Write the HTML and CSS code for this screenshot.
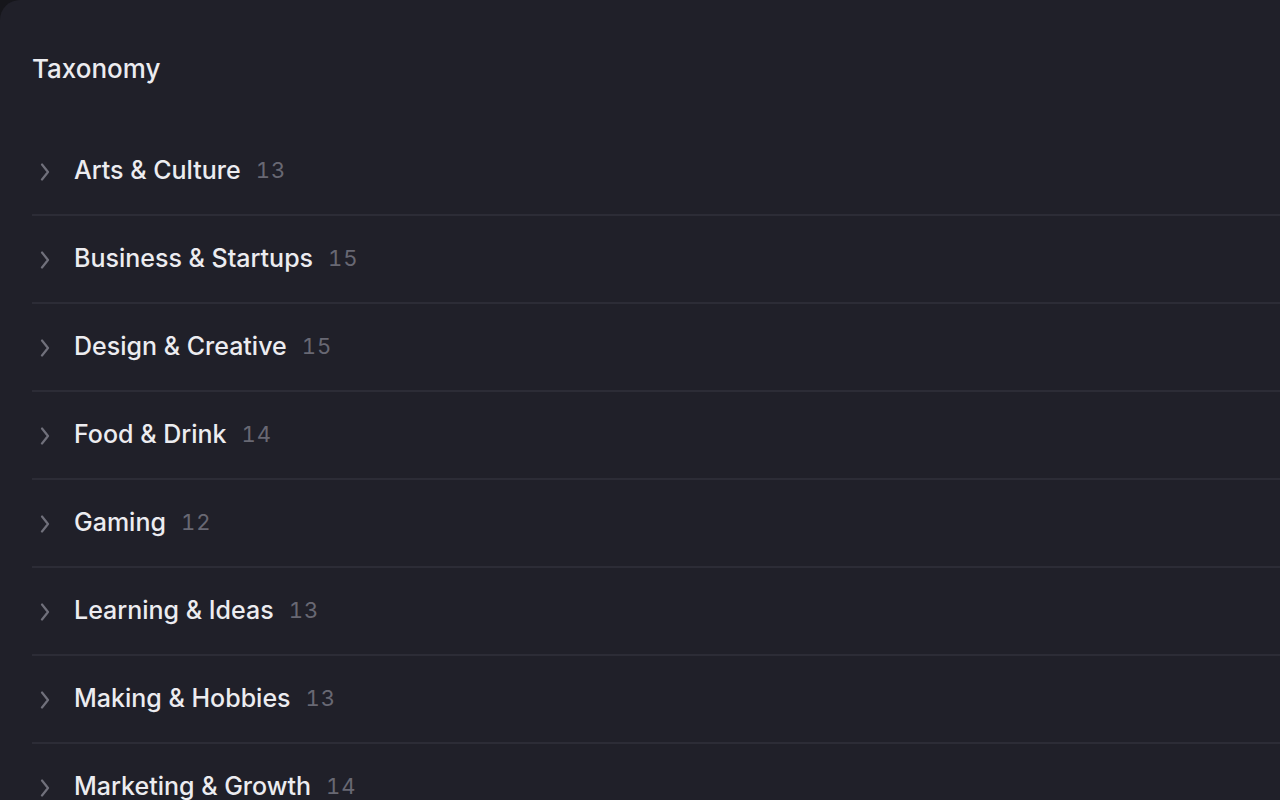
FILE: index.html
```html
<!DOCTYPE html>
<html lang="en">
<head>
  <meta charset="UTF-8">
  <title>Taxonomy</title>
  <link rel="stylesheet" href="styles.css">
</head>
<body>

<main class="panel">
  <h1 class="panel-title">Taxonomy</h1>

  <ul class="tree">
    <li class="tree-row">
      <svg class="chevron" viewBox="0 0 10 18"><path d="M2 1.5 8 9 2 16.5"/></svg>
      <span class="tree-label">Arts &amp; Culture</span>
      <span class="tree-count">13</span>
    </li>
    <li class="tree-row">
      <svg class="chevron" viewBox="0 0 10 18"><path d="M2 1.5 8 9 2 16.5"/></svg>
      <span class="tree-label">Business &amp; Startups</span>
      <span class="tree-count">15</span>
    </li>
    <li class="tree-row">
      <svg class="chevron" viewBox="0 0 10 18"><path d="M2 1.5 8 9 2 16.5"/></svg>
      <span class="tree-label">Design &amp; Creative</span>
      <span class="tree-count">15</span>
    </li>
    <li class="tree-row">
      <svg class="chevron" viewBox="0 0 10 18"><path d="M2 1.5 8 9 2 16.5"/></svg>
      <span class="tree-label">Food &amp; Drink</span>
      <span class="tree-count">14</span>
    </li>
    <li class="tree-row">
      <svg class="chevron" viewBox="0 0 10 18"><path d="M2 1.5 8 9 2 16.5"/></svg>
      <span class="tree-label">Gaming</span>
      <span class="tree-count">12</span>
    </li>
    <li class="tree-row">
      <svg class="chevron" viewBox="0 0 10 18"><path d="M2 1.5 8 9 2 16.5"/></svg>
      <span class="tree-label">Learning &amp; Ideas</span>
      <span class="tree-count">13</span>
    </li>
    <li class="tree-row">
      <svg class="chevron" viewBox="0 0 10 18"><path d="M2 1.5 8 9 2 16.5"/></svg>
      <span class="tree-label">Making &amp; Hobbies</span>
      <span class="tree-count">13</span>
    </li>
    <li class="tree-row">
      <svg class="chevron" viewBox="0 0 10 18"><path d="M2 1.5 8 9 2 16.5"/></svg>
      <span class="tree-label">Marketing &amp; Growth</span>
      <span class="tree-count">14</span>
    </li>
  </ul>
</main>

</body>
</html>
```

FILE: styles.css
```css
body {
  margin: 0;
  background-color: #16161b;
  font-family: Inter, "Noto Sans", sans-serif;
  color: #ececf0;
  overflow: hidden;
}

.panel {
  min-height: 100vh;
  background-color: #202029;
  border-top-left-radius: 20px;
  padding: 46px 0 0 32px;
  box-sizing: border-box;
}

.panel-title {
  margin: 0 0 36px 0;
  font-size: 26px;
  font-weight: 500;
  line-height: 46px;
}

/* lista de categorias */
.tree {
  list-style: none;
  margin: 0;
  padding: 0;
}

.tree-row {
  display: flex;
  align-items: center;
  height: 86px;
  border-bottom: 2px solid #2c2c36;
}

.chevron {
  width: 10px;
  height: 18px;
  margin: 1px 24px 0 8px;
  fill: none;
  stroke: #70707b;
  stroke-width: 2.2;
  stroke-linecap: round;
  stroke-linejoin: round;
}

.tree-label {
  margin-bottom: 2px;
  font-size: 25px;
  font-weight: 500;
}

.tree-count {
  margin: 0 0 3px 15px;
  font-size: 22px;
  letter-spacing: 1px;
  font-variant-numeric: tabular-nums;
  color: #686873;
}
```
